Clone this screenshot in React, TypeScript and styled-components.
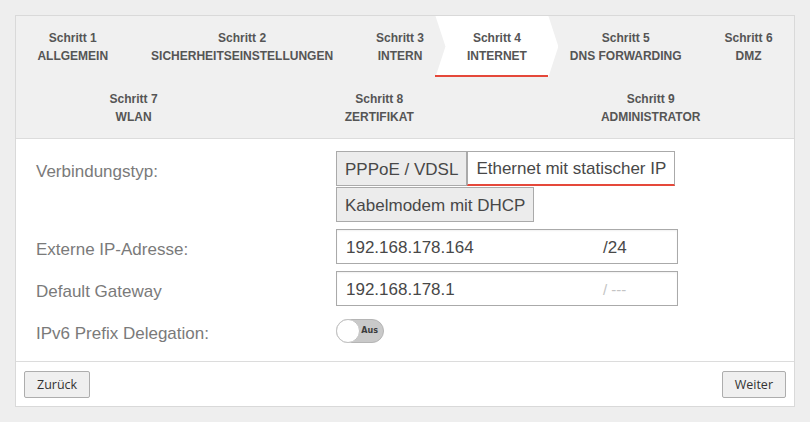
import React from "react";
import styled, { createGlobalStyle } from "styled-components";

const GlobalStyle = createGlobalStyle`
  html, body {
    margin: 0;
    padding: 0;
    background: #eeeeee;
  }
  * { box-sizing: border-box; }
`;

const Page = styled.div`
  padding: 15px;
  font-family: "Liberation Sans", Arial, sans-serif;
`;

const Wizard = styled.div`
  width: 780px;
  border: 1px solid #d9d9d9;
  background: #ffffff;
`;

const Steps = styled.nav`
  display: flex;
  flex-wrap: wrap;
  background: #f0f0f0;
  border-bottom: 1px solid #dcdcdc;
`;

const Step = styled.div<{ $active?: boolean }>`
  position: relative;
  flex: 1 1 auto;
  height: 61px;
  padding: 0 20px;
  display: flex;
  flex-direction: column;
  align-items: center;
  justify-content: center;
  font-size: 12px;
  font-weight: bold;
  line-height: 18px;
  color: #555555;
  text-align: center;
  white-space: nowrap;

  ${(p) =>
    p.$active &&
    `
    &::before {
      content: "";
      position: absolute;
      top: 0;
      bottom: 0;
      left: -10px;
      right: -10px;
      background: #ffffff;
      clip-path: polygon(0 0, calc(100% - 10px) 0, 100% 50%, calc(100% - 10px) 100%, 0 100%, 10px 50%);
    }
    &::after {
      content: "";
      position: absolute;
      bottom: 0;
      left: -10px;
      right: 0;
      height: 2px;
      background: #e5483a;
    }
  `}
`;

const StepText = styled.span`
  position: relative;
  z-index: 1;
`;

const Form = styled.div`
  padding: 12px 20px 13px;
  display: flex;
  flex-direction: column;
  gap: 7px;
  border-bottom: 1px solid #dcdcdc;
  font-size: 17px;
`;

const Row = styled.div`
  display: flex;
  align-items: flex-start;
`;

const Label = styled.div`
  width: 300px;
  height: 35px;
  padding-top: 3px;
  line-height: 35px;
  color: #7a7a7a;
  flex: none;
`;

const SegGroup = styled.div`
  width: 342px;
  display: flex;
  flex-wrap: wrap;
  gap: 1px 0;
`;

const Seg = styled.button<{ $active?: boolean }>`
  height: 35px;
  padding: 2px 8px 0;
  margin: 0;
  font-family: "Liberation Sans", Arial, sans-serif;
  font-size: 17px;
  color: #484848;
  background: ${(p) => (p.$active ? "#ffffff" : "#ececec")};
  border: 1px solid #aaaaaa;
  border-bottom: ${(p) => (p.$active ? "2px solid #e5483a" : "1px solid #aaaaaa")};
  border-radius: 0;
  cursor: pointer;
`;

const IpField = styled.div`
  width: 342px;
  height: 35px;
  padding-top: 2px;
  display: flex;
  align-items: center;
  border: 1px solid #aaaaaa;
  box-shadow: inset 0 1px 2px rgba(0, 0, 0, 0.06);
  background: #ffffff;
  color: #484848;
`;

const Address = styled.span`
  width: 266px;
  padding-left: 9px;
`;

const Prefix = styled.span<{ $empty?: boolean }>`
  color: ${(p) => (p.$empty ? "#c4c4c4" : "#484848")};
  font-size: ${(p) => (p.$empty ? "15px" : "17px")};
`;

const ToggleRow = styled.div`
  height: 35px;
  display: flex;
  align-items: center;
`;

const Toggle = styled.div`
  position: relative;
  width: 48px;
  height: 24px;
  border-radius: 12px;
  background: #c9c9c9;
  border: 1px solid #b5b5b5;
  display: flex;
  align-items: center;
  justify-content: flex-end;
  padding-right: 5px;
`;

const Knob = styled.span`
  position: absolute;
  left: -1px;
  top: -1px;
  width: 24px;
  height: 24px;
  border-radius: 50%;
  background: #ffffff;
  border: 1px solid #c2c2c2;
`;

const ToggleText = styled.span`
  font-family: "DejaVu Sans", sans-serif;
  font-size: 8px;
  font-weight: bold;
  color: #3c3c3c;
`;

const Footer = styled.div`
  height: 44px;
  padding: 0 8px;
  display: flex;
  align-items: center;
  justify-content: space-between;
`;

const NavButton = styled.button`
  height: 27px;
  padding: 0 12px;
  font-family: "Open Sans", "Noto Sans", sans-serif;
  font-size: 12.5px;
  color: #333333;
  background: #efefef;
  border: 1px solid #adadad;
  border-radius: 2px;
`;

const steps = [
  ["Schritt 1", "ALLGEMEIN"],
  ["Schritt 2", "SICHERHEITSEINSTELLUNGEN"],
  ["Schritt 3", "INTERN"],
  ["Schritt 4", "INTERNET"],
  ["Schritt 5", "DNS FORWARDING"],
  ["Schritt 6", "DMZ"],
  ["Schritt 7", "WLAN"],
  ["Schritt 8", "ZERTIFIKAT"],
  ["Schritt 9", "ADMINISTRATOR"],
];

export default function App() {
  return (
    <Page>
      <GlobalStyle />
      <Wizard>
        <Steps>
          {steps.map(([num, title], i) => (
            <Step key={num} $active={i === 3}>
              <StepText>{num}</StepText>
              <StepText>{title}</StepText>
            </Step>
          ))}
        </Steps>
        <Form>
          <Row>
            <Label>Verbindungstyp:</Label>
            <SegGroup>
              <Seg>PPPoE / VDSL</Seg>
              <Seg $active>Ethernet mit statischer IP</Seg>
              <Seg>Kabelmodem mit DHCP</Seg>
            </SegGroup>
          </Row>
          <Row>
            <Label>Externe IP-Adresse:</Label>
            <IpField>
              <Address>192.168.178.164</Address>
              <Prefix>/24</Prefix>
            </IpField>
          </Row>
          <Row>
            <Label>Default Gateway</Label>
            <IpField>
              <Address>192.168.178.1</Address>
              <Prefix $empty>/ ---</Prefix>
            </IpField>
          </Row>
          <Row>
            <Label>IPv6 Prefix Delegation:</Label>
            <ToggleRow>
              <Toggle>
                <Knob />
                <ToggleText>Aus</ToggleText>
              </Toggle>
            </ToggleRow>
          </Row>
        </Form>
        <Footer>
          <NavButton>Zurück</NavButton>
          <NavButton>Weiter</NavButton>
        </Footer>
      </Wizard>
    </Page>
  );
}
